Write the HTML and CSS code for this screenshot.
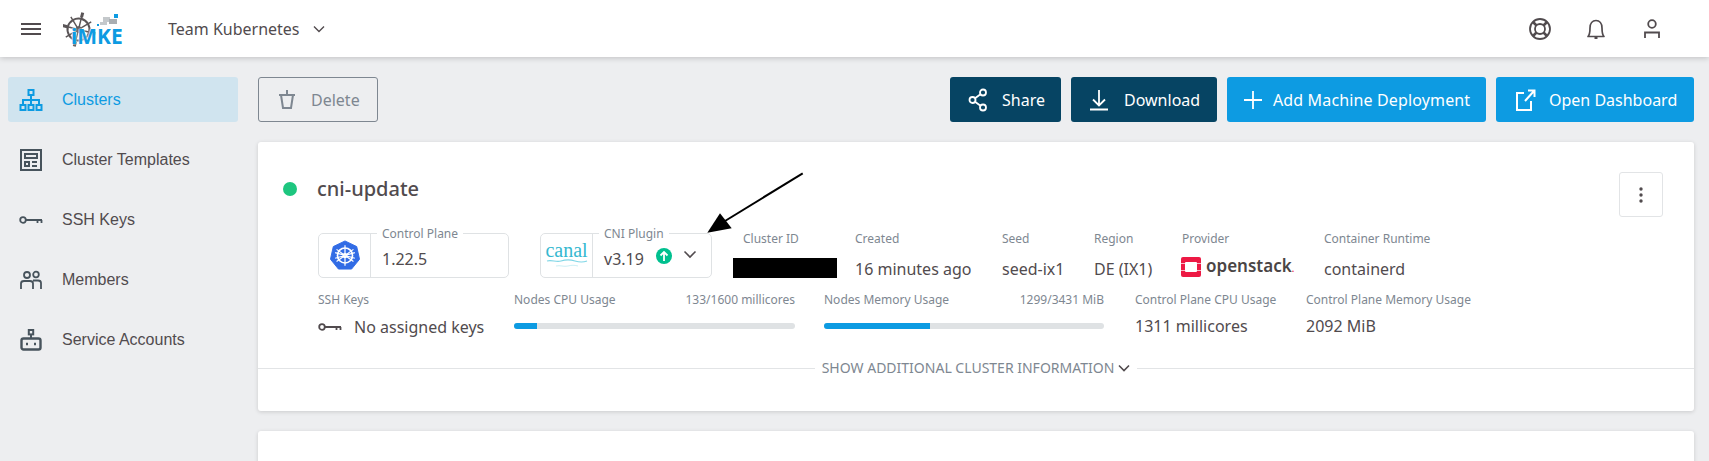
FILE: index.html
```html
<!DOCTYPE html>
<html lang="en">
<head>
    <meta charset="UTF-8">
    <meta name="viewport" content="width=device-width, initial-scale=1.0">
    <title>Cluster details</title>
    <link rel="stylesheet" href="styles.css">
</head>
<body>
    <header class="topbar">
        <button class="menu-button" aria-label="Menu">
            <svg width="20" height="12" viewBox="0 0 20 12"><path d="M0 1H20M0 6H20M0 11H20" stroke="#514b4e" stroke-width="1.800" fill="none"/></svg>
        </button>
        <div class="logo">
            <svg class="logo-wheel" width="60" height="46" viewBox="0 0 60 46" fill="none" stroke="#5a5557">
                <g transform="rotate(14 15.500 23.500)">
                    <circle cx="15.500" cy="23.500" r="11" stroke-width="2"/>
                    <circle cx="15.500" cy="23.500" r="2.500" stroke-width="1.600"/>
                    <path d="M15.500 8V39M0 23.500H31M5 13L26 34M26 13L5 34" stroke-width="1.400"/>
                    <path d="M15.500 6V11M15.500 36V41M-1 23.500H4M28 23.500H33" stroke-width="3"/>
                </g>
                <rect x="51" y="8" width="4" height="4" fill="#0d9be2" stroke="none"/>
                <rect x="40" y="11" width="7" height="5" fill="#c4c8cb" stroke="none"/>
                <rect x="46" y="13" width="8" height="5" fill="#a9aeb2" stroke="none"/>
                <rect x="37" y="16" width="7" height="3" fill="#c4c8cb" stroke="none"/>
                <rect x="34" y="18" width="2" height="2" fill="#0d9be2" stroke="none"/>
            </svg>
            <span class="logo-text">iMKE</span>
        </div>
        <div class="team">
            <span>Team Kubernetes</span>
            <svg width="12" height="8" viewBox="0 0 12 8"><path d="M1 1.500L6 6.500L11 1.500" stroke="#514b4e" stroke-width="1.400" fill="none"/></svg>
        </div>
        <div class="top-icons">
            <svg width="24" height="24" viewBox="0 0 24 24" fill="none" stroke="#514b4e" stroke-width="1.800"><circle cx="12" cy="12" r="10"/><circle cx="12" cy="12" r="5"/><path d="M5 5L8.500 8.500M19 5L15.500 8.500M5 19L8.500 15.500M19 19L15.500 15.500" stroke-width="2.600"/></svg>
            <svg width="24" height="24" viewBox="0 0 24 24" fill="none" stroke="#514b4e" stroke-width="1.700"><path d="M4 19.500C6 17.500 6 15 6 11C6 6.500 8.500 3.500 12 3.500C15.500 3.500 18 6.500 18 11C18 15 18 17.500 20 19.500Z" stroke-linejoin="round"/><path d="M10.500 21H13.500" stroke-width="2"/></svg>
            <svg width="24" height="24" viewBox="0 0 24 24" fill="none" stroke="#514b4e" stroke-width="1.800"><circle cx="12" cy="7" r="3.800"/><path d="M5 21V15.500H19V21"/></svg>
        </div>
    </header>

    <div class="page">
        <nav class="sidebar">
            <a class="nav-item active">
                <svg width="24" height="24" viewBox="0 0 24 24" fill="none" stroke="#0d9be2" stroke-width="2"><rect x="9.500" y="2" width="5" height="5"/><rect x="1.500" y="17" width="5" height="5"/><rect x="9.500" y="17" width="5" height="5"/><rect x="17.500" y="17" width="5" height="5"/><path d="M12 7V17M4 17V12H20V17"/></svg>
                <span>Clusters</span>
            </a>
            <a class="nav-item">
                <svg width="24" height="24" viewBox="0 0 24 24" fill="none" stroke="#47535c" stroke-width="2"><rect x="2" y="2" width="20" height="20"/><rect x="6" y="6" width="12" height="4"/><rect x="6" y="14" width="4" height="4"/><path d="M13 14H18M13 18H18"/></svg>
                <span>Cluster Templates</span>
            </a>
            <a class="nav-item">
                <svg width="24" height="24" viewBox="0 0 24 24" fill="none" stroke="#47535c" stroke-width="1.800"><circle cx="4" cy="12" r="2.800"/><path d="M7 12H23M18.500 12V15M22.500 12V15"/></svg>
                <span>SSH Keys</span>
            </a>
            <a class="nav-item">
                <svg width="24" height="24" viewBox="0 0 24 24" fill="none" stroke="#47535c" stroke-width="1.800"><circle cx="8" cy="7" r="3"/><circle cx="17" cy="6.500" r="2.800"/><path d="M2 21V15.500C2 14 3 13 5 13H11C13 13 14 14 14 15.500V21M14 12.500H19C21 12.500 22 13.500 22 15V21"/></svg>
                <span>Members</span>
            </a>
            <a class="nav-item">
                <svg width="24" height="24" viewBox="0 0 24 24" fill="none" stroke="#47535c" stroke-width="2.400"><rect x="9.800" y="2" width="4.400" height="4.400" stroke-width="2"/><path d="M12 6.500V10" stroke-width="2"/><rect x="2.500" y="10.500" width="19" height="11" rx="2"/><path d="M7 16H9M15 16H17" stroke-width="2.400"/></svg>
                <span>Service Accounts</span>
            </a>
        </nav>

        <main class="content">
            <div class="actions">
                <button class="btn btn-delete">
                    <svg width="24" height="24" viewBox="0 0 24 24" fill="none" stroke="#7e8791" stroke-width="2"><path d="M4 7H20M12 2V7M6 7L8 20H16L18 7"/></svg>
                    Delete
                </button>
                <div class="actions-right">
                    <button class="btn btn-dark btn-share">
                        <svg width="24" height="24" viewBox="0 0 24 24" fill="none" stroke="#fff" stroke-width="1.800"><circle cx="17" cy="4.500" r="3"/><circle cx="6.500" cy="12" r="3"/><circle cx="17" cy="19.500" r="3"/><path d="M9 10.300L14.500 6.200M9 13.700L14.500 17.800"/></svg>
                        Share
                    </button>
                    <button class="btn btn-dark btn-download">
                        <svg width="24" height="24" viewBox="0 0 24 24" fill="none" stroke="#fff" stroke-width="1.800"><path d="M12 2V17M6 11.500L12 17.500L18 11.500M3 21.500H21"/></svg>
                        Download
                    </button>
                    <button class="btn btn-blue btn-add">
                        <svg width="24" height="24" viewBox="0 0 24 24" fill="none" stroke="#fff" stroke-width="1.800"><path d="M12 3V21M3 12H21"/></svg>
                        Add Machine Deployment
                    </button>
                    <button class="btn btn-blue btn-open">
                        <svg width="24" height="24" viewBox="0 0 24 24" fill="none" stroke="#fff" stroke-width="2"><path d="M11 5H4V22H18V13M12 13L21 3M15 2.500H21.500V9"/></svg>
                        Open Dashboard
                    </button>
                </div>
            </div>

            <section class="card">
                <div class="card-head">
                    <span class="status-dot"></span>
                    <h1>cni-update</h1>
                    <button class="kebab" aria-label="More">
                        <svg width="4" height="16" viewBox="0 0 4 16" fill="#514b4e"><circle cx="2" cy="2" r="1.700"/><circle cx="2" cy="8" r="1.700"/><circle cx="2" cy="14" r="1.700"/></svg>
                    </button>
                </div>

                <div class="info-row">
                    <fieldset class="version-box box-control">
                        <legend>Control Plane</legend>
                        <div class="box-logo">
                            <svg width="30" height="30" viewBox="0 0 32 32">
                                <path d="M16 1L28.500 7L31.500 20.500L23 31H9L.500 20.500L3.500 7Z" fill="#326ce5" stroke="#326ce5" stroke-linejoin="round"/>
                                <g fill="none" stroke="#fff">
                                    <circle cx="16" cy="16.500" r="8" stroke-width="1.800"/>
                                    <circle cx="16" cy="16.500" r="2" stroke-width="1.500"/>
                                    <path d="M16 5.500V27.500M7 10L25 23M25 10L7 23M5.500 19.500L26.500 13.500M26.500 19.500L5.500 13.500" stroke-width="1.300"/>
                                </g>
                            </svg>
                        </div>
                        <div class="box-value">1.22.5</div>
                    </fieldset>
                    <fieldset class="version-box box-cni">
                        <legend>CNI Plugin</legend>
                        <div class="box-logo canal">
                            <span>canal</span>
                            <svg width="42" height="10" viewBox="0 0 42 10" fill="none" stroke="#7fd6e6"><path d="M1 2C6 .500 10 3.500 15 2S24 .500 29 2S37 3.500 41 2" stroke-width="1.200"/><path d="M10 7C14 6 18 8 22 7S28 6 32 7" stroke-width=".800" opacity=".5"/></svg>
                        </div>
                        <div class="box-value">
                            <span>v3.19</span>
                            <span class="upgrade">
                                <svg width="16" height="16" viewBox="0 0 16 16"><circle cx="8" cy="8" r="8" fill="#00c08f"/><path d="M8 13V4M4.500 7.500L8 4L11.500 7.500" stroke="#fff" stroke-width="1.800" fill="none"/></svg>
                            </span>
                            <svg class="box-chevron" width="14" height="9" viewBox="0 0 14 9"><path d="M1.500 1.500L7 7L12.500 1.500" stroke="#514b4e" stroke-width="1.600" fill="none"/></svg>
                        </div>
                    </fieldset>
                    <div class="prop prop-id"><label>Cluster ID</label><div class="redacted"></div></div>
                    <div class="prop prop-created"><label>Created</label><div>16 minutes ago</div></div>
                    <div class="prop prop-seed"><label>Seed</label><div>seed-ix1</div></div>
                    <div class="prop prop-region"><label>Region</label><div>DE (IX1)</div></div>
                    <div class="prop prop-provider">
                        <label>Provider</label>
                        <div class="openstack">
                            <svg width="20" height="20" viewBox="0 0 20 20">
                                <rect width="20" height="20" rx="2" fill="#ed1944"/>
                                <rect x="4" y="5" width="12" height="10" rx="1" fill="#fff"/>
                                <path d="M0 6.500H4M16 6.500H20M0 13.500H4M16 13.500H20" stroke="#fff" stroke-width="1" opacity=".7"/>
                            </svg>
                            <span>openstack<i>.</i></span>
                        </div>
                    </div>
                    <div class="prop"><label>Container Runtime</label><div>containerd</div></div>
                </div>

                <div class="info-row usage-row">
                    <div class="prop prop-keys">
                        <label>SSH Keys</label>
                        <div class="no-keys">
                            <svg width="24" height="24" viewBox="0 0 24 24" fill="none" stroke="#514b4e" stroke-width="1.800"><circle cx="4" cy="12" r="2.800"/><path d="M7 12H23M18.500 12V15M22.500 12V15"/></svg>
                            No assigned keys
                        </div>
                    </div>
                    <div class="usage usage-cpu">
                        <div class="usage-labels"><label>Nodes CPU Usage</label><label>133/1600 millicores</label></div>
                        <div class="bar"><div class="bar-fill" style="width: 8.300%"></div></div>
                    </div>
                    <div class="usage usage-memory">
                        <div class="usage-labels"><label>Nodes Memory Usage</label><label>1299/3431 MiB</label></div>
                        <div class="bar"><div class="bar-fill" style="width: 37.900%"></div></div>
                    </div>
                    <div class="prop prop-cp-cpu"><label>Control Plane CPU Usage</label><div>1311 millicores</div></div>
                    <div class="prop"><label>Control Plane Memory Usage</label><div>2092 MiB</div></div>
                </div>

                <div class="more-info">
                    <span>SHOW ADDITIONAL CLUSTER INFORMATION</span>
                    <svg width="12" height="8" viewBox="0 0 12 8"><path d="M1 1.500L6 6.500L11 1.500" stroke="#514b4e" stroke-width="1.600" fill="none"/></svg>
                </div>
            </section>

            <section class="card card-next"></section>
        </main>
    </div>

    <svg class="arrow" width="110" height="70" viewBox="0 0 110 70">
        <path d="M102.700 3.300L25 51" stroke="#000" stroke-width="2" fill="none"/>
        <path d="M7.300 62.700L20 43.300L31.700 58.300Z" fill="#000"/>
    </svg>
</body>
</html>
```

FILE: styles.css
```css
* {
    box-sizing: border-box;
}

html, body {
    height: 100%;
}

body {
    margin: 0;
    overflow: hidden;
    position: relative;
    background-color: #edeef0;
    font-family: "Noto Sans", sans-serif;
    color: #514b4e;
}

button {
    font-family: inherit;
    cursor: pointer;
}

.topbar {
    height: 57px;
    display: flex;
    align-items: center;
    background-color: #fff;
    box-shadow: 0 1px 6px rgba(0, 0, 0, 0.2);
    padding: 0 20px 0 21px;
    position: relative;
}

.menu-button {
    background: none;
    border: none;
    padding: 0;
    display: flex;
    margin-right: 22px;
}

.logo {
    width: 105px;
    height: 46px;
    position: relative;
}

.logo-wheel {
    position: absolute;
    left: 0;
    top: 0;
}

.logo-text {
    position: absolute;
    left: 8px;
    top: 18px;
    font-size: 21px;
    font-weight: 700;
    line-height: 24px;
    color: #0d9be2;
    text-shadow: 0 0 2px #fff, 0 0 2px #fff;
}

.team {
    display: flex;
    align-items: center;
    gap: 13px;
    font-size: 16px;
}

.top-icons {
    margin-left: auto;
    display: flex;
    gap: 32px;
    padding-right: 25px;
}

.page {
    display: flex;
    padding: 20px 15px 0 8px;
}

.sidebar {
    width: 230px;
    margin-right: 20px;
    display: flex;
    flex-direction: column;
    gap: 15px;
    flex-shrink: 0;
}

.nav-item {
    height: 45px;
    display: flex;
    align-items: center;
    gap: 19px;
    padding-left: 11px;
    border-radius: 3px;
    font-family: "Liberation Sans", sans-serif;
    font-size: 16px;
}

.nav-item.active {
    background-color: #d0e4ef;
    color: #0d9be2;
}

.content {
    flex: 1;
    min-width: 0;
}

.actions {
    display: flex;
    justify-content: space-between;
    height: 45px;
    margin-bottom: 20px;
}

.actions-right {
    display: flex;
    gap: 10px;
}

.btn {
    height: 45px;
    display: flex;
    align-items: center;
    gap: 12px;
    padding: 0 0 0 16px;
    border-radius: 3px;
    border: none;
    font-size: 16px;
    color: #fff;
}

.btn-delete {
    width: 120px;
    background: none;
    border: 1px solid #7e8791;
    color: #7e8791;
}

.btn-dark {
    background-color: #064463;
}

.btn-share {
    width: 111px;
}

.btn-download {
    width: 146px;
    gap: 13px;
}

.btn-blue {
    background-color: #0d9be2;
}

.btn-add {
    width: 259px;
    padding-left: 14px;
    gap: 8px;
    letter-spacing: 0.14px;
}

.btn-open {
    width: 198px;
    padding-left: 17px;
}

.card {
    background-color: #fff;
    border-radius: 3px;
    box-shadow: 0 1px 4px rgba(0, 0, 0, 0.15);
    height: 269px;
    position: relative;
}

.card-next {
    margin-top: 20px;
}

.card-head {
    height: 88px;
    display: flex;
    align-items: flex-start;
    padding: 30px 31px 0 25px;
}

.status-dot {
    width: 14px;
    height: 14px;
    border-radius: 50%;
    background-color: #1ec67f;
    margin: 10px 20px 0 0;
}

.card-head h1 {
    margin: 0;
    font-size: 20px;
    font-weight: 500;
    line-height: 34px;
}

.kebab {
    margin-left: auto;
    width: 44px;
    height: 45px;
    background: #fff;
    border: 1px solid #e2e4e6;
    border-radius: 3px;
    display: flex;
    align-items: center;
    justify-content: center;
}

.info-row {
    display: flex;
    padding-left: 60px;
    height: 49px;
}

.version-box {
    margin: -5px 0 0;
    padding: 0;
    height: 53px;
    display: flex;
    border: 1px solid #dfe2e4;
    border-radius: 5px;
    min-width: 0;
}

.version-box legend {
    font-size: 12px;
    line-height: 17px;
    color: #7e8791;
    margin-left: 58px;
    padding: 0 5px;
}

.box-control {
    width: 191px;
    margin-right: 31px;
}

.box-cni {
    width: 172px;
    margin-right: 30px;
}

.box-logo {
    width: 52px;
    height: 44px;
    margin-top: -8px;
    padding-bottom: 2px;
    border-right: 1px solid #dfe2e4;
    display: flex;
    flex-direction: column;
    align-items: center;
    justify-content: center;
    flex-shrink: 0;
}

.canal span {
    font-family: "Liberation Serif", serif;
    font-size: 20px;
    line-height: 17px;
    color: #35b8d0;
}

.box-value {
    display: flex;
    align-items: center;
    padding-left: 11px;
    height: 44px;
    margin-top: -5px;
    font-size: 16px;
}

.upgrade {
    display: flex;
    margin: -6px 0 0 12px;
}

.box-chevron {
    margin: -10px 0 0 11px;
}

.prop {
    font-size: 16px;
    line-height: 22px;
}

.prop label,
.usage label {
    display: block;
    font-size: 12px;
    line-height: 17px;
    color: #7e8791;
}

.prop label {
    margin-bottom: 11px;
}

.prop-id {
    width: 113px;
}

.prop-id label {
    padding-left: 1px;
}

.prop-created {
    width: 147px;
}

.prop-seed {
    width: 92px;
}

.prop-region {
    width: 88px;
}

.prop-provider {
    width: 142px;
}

.redacted {
    width: 104px;
    height: 20px;
    margin-left: -9px;
    background-color: #000;
}

.openstack {
    display: flex;
    align-items: center;
    gap: 5px;
    height: 22px;
    margin: -2px 0 0 -1px;
    font-size: 17px;
    font-weight: 600;
    color: #4a4545;
}

.openstack i {
    color: #ed1944;
    font-style: normal;
    font-size: 9px;
}

.usage-row {
    margin-top: 12px;
}

.prop-keys {
    width: 196px;
}

.no-keys {
    display: flex;
    align-items: center;
    gap: 12px;
}

.usage-cpu {
    width: 281px;
    margin-right: 29px;
}

.usage-memory {
    width: 280px;
    margin-right: 31px;
}

.usage-labels {
    display: flex;
    justify-content: space-between;
    margin-bottom: 15px;
}

.bar {
    height: 6px;
    border-radius: 3px;
    background-color: #dfe2e4;
    overflow: hidden;
}

.bar-fill {
    height: 100%;
    background-color: #0d9be2;
}

.usage-row .prop label {
    margin-bottom: 7px;
}

.prop-cp-cpu {
    width: 171px;
}

.more-info {
    position: absolute;
    left: 0;
    right: 0;
    top: 217px;
    display: flex;
    align-items: center;
    justify-content: center;
    gap: 4px;
    font-size: 14px;
    line-height: 18px;
    color: #7e8791;
}

.more-info::before,
.more-info::after {
    content: "";
    flex: 1;
    height: 1px;
    background-color: #e2e4e6;
}

.more-info::before {
    margin-right: 3px;
}

.more-info::after {
    margin-left: 3px;
}

.arrow {
    position: absolute;
    left: 700px;
    top: 170px;
}
```
